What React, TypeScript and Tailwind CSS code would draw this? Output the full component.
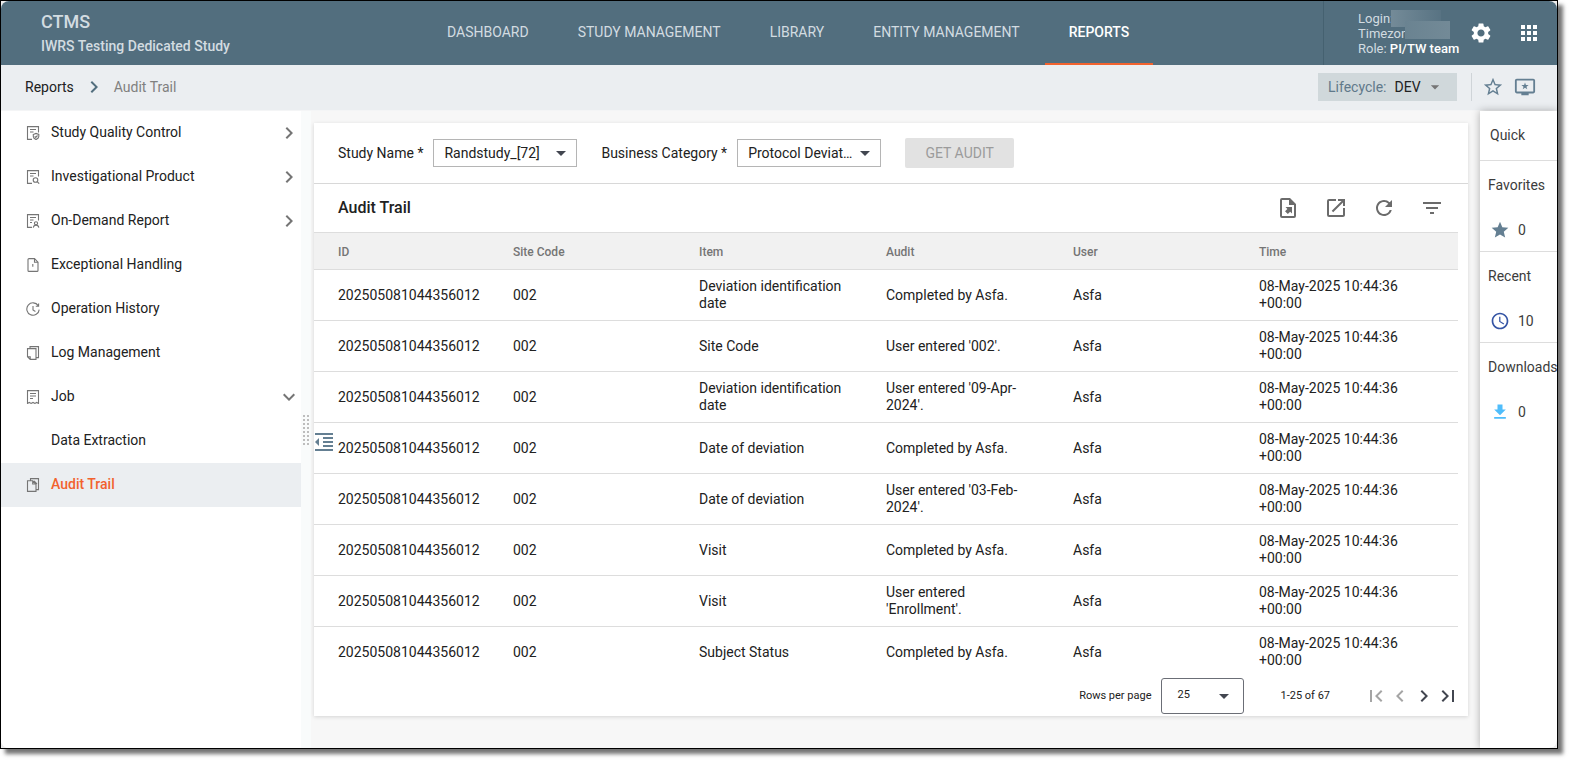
import type { ReactNode } from 'react'
import {
  MdAccessTime,
  MdApps,
  MdArrowDropDown,
  MdChevronLeft,
  MdChevronRight,
  MdExpandMore,
  MdFilterList,
  MdFirstPage,
  MdFormatIndentDecrease,
  MdLastPage,
  MdOpenInNew,
  MdRefresh,
  MdSettings,
  MdStar,
  MdStarBorder,
} from 'react-icons/md'

interface MenuItem {
  label: string
  icon?: ReactNode
  arrow?: 'right' | 'down'
  active?: boolean
}

interface AuditRow {
  item: string
  audit: string
}

const NAV = ['DASHBOARD', 'STUDY MANAGEMENT', 'LIBRARY', 'ENTITY MANAGEMENT', 'REPORTS']

function SmallIcon({ children }: { children: ReactNode }) {
  return (
    <svg className="size-[14px] shrink-0" viewBox="0 0 14 14" fill="none" stroke="currentColor" strokeWidth={1.1}>
      {children}
    </svg>
  )
}

// page outline shared by the report icons, open at the bottom right for the badge
const REPORT_PAGE = 'M6 13.4H1.5V.6h11v5.9M4 3.5h6M4 6h3.5'

const MENU: MenuItem[] = [
  {
    label: 'Study Quality Control',
    arrow: 'right',
    icon: (
      <SmallIcon>
        <path d={REPORT_PAGE} />
        <path d="M7.3 8.4 10 7.4l2.8 1v2.2c0 1.4-1.2 2.3-2.8 3-1.6-.7-2.7-1.6-2.7-3zM8.7 10.4l1 1 1.8-1.9" />
      </SmallIcon>
    ),
  },
  {
    label: 'Investigational Product',
    arrow: 'right',
    icon: (
      <SmallIcon>
        <path d={REPORT_PAGE} />
        <circle cx="9.5" cy="10" r="2.3" />
        <path d="m11.2 11.7 2 2" />
      </SmallIcon>
    ),
  },
  {
    label: 'On-Demand Report',
    arrow: 'right',
    icon: (
      <SmallIcon>
        <path d={REPORT_PAGE} />
        <path d="M4 8.500h2" />
        <circle cx="10" cy="9.3" r="1.6" />
        <path d="M7.3 13.6c.2-1.6 1-2.5 2.7-2.5s2.6.9 2.8 2.5" />
      </SmallIcon>
    ),
  },
  {
    label: 'Exceptional Handling',
    icon: (
      <SmallIcon>
        <path d="M3 .6h5.500L12 4.200v8.200a1 1 0 0 1-1 1H3a1 1 0 0 1-1-1V1.600a1 1 0 0 1 1-1zM8.500.6v3.600H12M6.800 6v2.800" />
      </SmallIcon>
    ),
  },
  {
    label: 'Operation History',
    icon: (
      <SmallIcon>
        <path d="M12.2 3.6A6.2 6.2 0 1 0 13.2 7.6M12.6 1.4v2.8H9.8M7 4v4l2.4 1.4" />
      </SmallIcon>
    ),
  },
  {
    label: 'Log Management',
    icon: (
      <SmallIcon>
        <path d="M4 2.600V.6h8.500v11h-2M1.500 2.600H10v10.800H4.200L1.500 10.700zM1.500 10.700h2.700v2.700" />
      </SmallIcon>
    ),
  },
  {
    label: 'Job',
    arrow: 'down',
    icon: (
      <SmallIcon>
        <path d="M1.5 13.4V.6h11v12.8l-1.8-1-1.8 1-1.900-1-1.900 1-1.800-1zM4 3.500h6M4 6h6M4 8.500h3" />
      </SmallIcon>
    ),
  },
  { label: 'Data Extraction' },
  {
    label: 'Audit Trail',
    active: true,
    icon: (
      <SmallIcon>
        <path d="M4.5 2.800V.6h8v11H10M1.500 2.800h5.200L10 6v7.400H1.500zM6.700 2.800V6H10M8 2.800l3 3" />
      </SmallIcon>
    ),
  },
]

const COLUMNS = [
  { label: 'ID', width: 'w-[187px] pl-6' },
  { label: 'Site Code', width: 'w-[186px] pl-3' },
  { label: 'Item', width: 'w-[187px] pl-3' },
  { label: 'Audit', width: 'w-[187px] pl-3' },
  { label: 'User', width: 'w-[186px] pl-3' },
  { label: 'Time', width: 'pl-3' },
]

const ROWS: AuditRow[] = [
  { item: 'Deviation identification date', audit: 'Completed by Asfa.' },
  { item: 'Site Code', audit: "User entered '002'." },
  { item: 'Deviation identification date', audit: "User entered '09-Apr-2024'." },
  { item: 'Date of deviation', audit: 'Completed by Asfa.' },
  { item: 'Date of deviation', audit: "User entered '03-Feb-2024'." },
  { item: 'Visit', audit: 'Completed by Asfa.' },
  { item: 'Visit', audit: "User entered 'Enrollment'." },
  { item: 'Subject Status', audit: 'Completed by Asfa.' },
]

function Header() {
  return (
    <header className="flex h-16 bg-[#526e7e] text-[#d3dce1]">
      <div className="flex w-[422px] shrink-0 flex-col justify-center pt-0.5 pl-10 font-medium">
        <div className="text-lg leading-6">CTMS</div>
        <div className="text-sm leading-6">IWRS Testing Dedicated Study</div>
      </div>
      <nav className="flex flex-1 gap-px">
        {NAV.map((label) => (
          <a
            key={label}
            href="#"
            className={`flex items-center border-b-2 px-6 text-sm ${
              label === 'REPORTS' ? 'border-[#f2622e] font-medium text-white' : 'border-transparent'
            }`}
          >
            {label}
          </a>
        ))}
      </nav>
      <div className="flex w-[234px] shrink-0 items-center border-l border-[#456170] pr-4 pl-[34px]">
        <div className="relative w-[112px] text-[13px] leading-[15px] whitespace-nowrap">
          <div>Login:</div>
          <div>Timezone:</div>
          <div>
            Role: <span className="font-medium text-white">PI/TW team</span>
          </div>
          <div className="absolute -top-px left-[33px] h-[17px] w-[50px] bg-linear-to-r from-[#748b98] to-[#587383]" />
          <div className="absolute top-[10px] left-[47px] h-[18px] w-[45px] bg-linear-to-r from-[#6a8391] to-[#738a97]" />
        </div>
        <button aria-label="Settings" className="text-white">
          <MdSettings className="size-6" />
        </button>
        <button aria-label="Applications" className="ml-6 text-white">
          <MdApps className="size-6" />
        </button>
      </div>
    </header>
  )
}

function Breadcrumbs() {
  return (
    <div className="flex h-[46px] items-center border-b border-[#f4f5f6] bg-[#ebeef1] pr-[21px] pb-0.5 pl-6 text-sm">
      <a href="#" className="text-[#212121]">
        Reports
      </a>
      <MdChevronRight className="mx-2 size-6 text-[#526e7e]" />
      <span className="text-[#808080]">Audit Trail</span>
      <div className="ml-auto flex items-center">
        <div className="relative flex h-7 w-[139px] items-center bg-[#d0d8db] pl-[10px]">
          <label htmlFor="lifecycle" className="text-[#60798a]">
            Lifecycle:
          </label>
          <select id="lifecycle" className="ml-2 flex-1 appearance-none bg-transparent text-[#212121]">
            <option>DEV</option>
          </select>
          <MdArrowDropDown className="pointer-events-none absolute right-3 size-5 text-[#757575]" />
        </div>
        <div className="mr-[10px] ml-[14px] h-7 w-px bg-[#cfd4d8]" />
        <button aria-label="Add to favorites" className="text-[#647f92]">
          <MdStarBorder className="size-[22px]" />
        </button>
        <button aria-label="Quick panel" className="ml-[10px] text-[#647f92]">
          <svg className="size-[22px]" viewBox="0 0 24 24" fill="currentColor">
            <path d="M21 3H3a2 2 0 0 0-2 2v12a2 2 0 0 0 2 2h5v2h8v-2h5a2 2 0 0 0 2-2V5a2 2 0 0 0-2-2zm0 14H3V5h18v12z" />
            <path d="m12 7 1 2.8h3l-2.4 1.8.9 2.9-2.5-1.8-2.5 1.8.9-2.9L8 9.8h3z" />
          </svg>
        </button>
      </div>
    </div>
  )
}

function Sidebar() {
  return (
    <nav className="w-[300px] shrink-0 bg-white text-sm">
      {MENU.map((item) => (
        <a
          key={item.label}
          href="#"
          className={`flex h-11 items-center pb-0.5 pl-[25px] ${
            item.active ? 'bg-[#ebeef1] font-medium text-[#f2622e]' : 'text-[#212121]'
          }`}
        >
          <span className="mt-0.5 w-[25px] text-[#757575]">{item.icon}</span>
          {item.label}
          {item.arrow === 'right' && <MdChevronRight className="mt-0.5 ml-auto size-6 text-[#757575]" />}
          {item.arrow === 'down' && <MdExpandMore className="mt-0.5 ml-auto size-6 text-[#757575]" />}
        </a>
      ))}
    </nav>
  )
}

function Splitter() {
  return (
    <div className="flex w-[10px] shrink-0 items-center justify-center bg-[#f9fbfb]">
      <div className="grid grid-cols-2 gap-0.5">
        {Array.from({ length: 16 }, (_, i) => (
          <span key={i} className="size-0.5 bg-[#bdbdbd]" />
        ))}
      </div>
    </div>
  )
}

function FilterSelect({ id, label, value }: { id: string; label: string; value: string }) {
  return (
    <div className="flex items-center gap-[10px]">
      <label htmlFor={id}>{label} *</label>
      <div className="relative">
        <select
          id={id}
          className="h-7 w-36 appearance-none overflow-hidden border border-[#b5b5b5] bg-white pr-[25px] pl-[10px] text-ellipsis"
        >
          <option>{value}</option>
        </select>
        <MdArrowDropDown className="pointer-events-none absolute top-0.5 right-1 size-6 text-[#424650]" />
      </div>
    </div>
  )
}

function AuditTable() {
  return (
    <div className="pr-[10px]">
      <table className="w-full table-fixed border-separate border-spacing-0 text-left text-sm leading-[17px]">
        <thead className="bg-[#f1f1f1] text-xs text-[#757575]">
          <tr>
            {COLUMNS.map((col) => (
              <th key={col.label} className={`h-[37px] border-b border-[#dddddd] pt-0.5 font-medium ${col.width}`}>
                {col.label}
              </th>
            ))}
          </tr>
        </thead>
        <tbody className="[&_td]:h-[51px] [&_td]:border-b [&_td]:border-[#dddddd] [&_td]:pr-6 [&_td]:pl-3 [&_td:first-child]:pr-0 [&_td:first-child]:pl-6 [&_tr:last-child_td]:h-[50px] [&_tr:last-child_td]:border-b-0">
          {ROWS.map((row, i) => (
            <tr key={i}>
              <td>202505081044356012</td>
              <td>002</td>
              <td>{row.item}</td>
              <td>{row.audit}</td>
              <td>Asfa</td>
              <td>08-May-2025 10:44:36 +00:00</td>
            </tr>
          ))}
        </tbody>
      </table>
    </div>
  )
}

function Pagination() {
  return (
    <div className="flex items-center justify-end pt-px pr-2 pb-0.5 text-[11px]">
      <label htmlFor="rows-per-page">Rows per page</label>
      <div className="relative ml-[10px]">
        <select
          id="rows-per-page"
          className="h-9 w-[83px] appearance-none rounded-[3px] border border-[#6b6e76] bg-white pb-0.5 pl-[15px]"
        >
          <option>25</option>
        </select>
        <MdArrowDropDown className="pointer-events-none absolute top-1.5 right-2 size-6 text-[#424650]" />
      </div>
      <span className="ml-9">1-25 of 67</span>
      <div className="ml-[34px] flex text-[#424650]">
        <button aria-label="First page" className="text-[#a5a5a5]" disabled>
          <MdFirstPage className="size-6" />
        </button>
        <button aria-label="Previous page" className="text-[#a5a5a5]" disabled>
          <MdChevronLeft className="size-6" />
        </button>
        <button aria-label="Next page">
          <MdChevronRight className="size-6" />
        </button>
        <button aria-label="Last page">
          <MdLastPage className="size-6" />
        </button>
      </div>
    </div>
  )
}

function MainPanel() {
  return (
    <main className="relative min-w-0 flex-1 bg-[#f7f7f7] pt-3 pr-3 pb-8 pl-[3px]">
      <div className="bg-white text-[#212121] shadow-[0_1px_4px_rgba(0,0,0,0.14)]">
        <div className="flex h-[61px] items-center gap-6 border-b border-[#d8d8d8] px-6 text-sm">
          <FilterSelect id="study-name" label="Study Name" value="Randstudy_[72]" />
          <FilterSelect id="business-category" label="Business Category" value="Protocol Deviation" />
          <button className="h-[30px] w-[109px] rounded-xs bg-[#e2e2e2] text-[#9b9b9b]" disabled>
            GET AUDIT
          </button>
        </div>
        <div className="mr-[10px] flex h-[49px] items-center justify-between border-b border-[#dddddd] pr-[14px] pl-6">
          <h1 className="text-base font-medium">Audit Trail</h1>
          <div className="flex gap-6 text-[#6b6b6b]">
            <button aria-label="Export">
              <svg className="size-6" viewBox="0 0 24 24" fill="currentColor">
                <path
                  fillRule="evenodd"
                  d="M6 2h8l6 6v12a2 2 0 0 1-2 2H6a2 2 0 0 1-2-2V4a2 2 0 0 1 2-2zm0 2v16h12V9h-5V4z"
                />
                <path d="M9.500 11H16v6.500l-1.800-1.800-2.400 2.400L9 15.300l2.400-2.400z" />
              </svg>
            </button>
            <button aria-label="Open in new window">
              <MdOpenInNew className="size-6" />
            </button>
            <button aria-label="Refresh">
              <MdRefresh className="size-6" />
            </button>
            <button aria-label="Filter">
              <MdFilterList className="size-6" />
            </button>
          </div>
        </div>
        <AuditTable />
        <Pagination />
      </div>
      <button aria-label="Collapse menu" className="absolute top-1/2 left-px text-[#647f92]">
        <MdFormatIndentDecrease className="size-6" />
      </button>
    </main>
  )
}

function QuickPanel() {
  const sections = [
    { label: 'Favorites', count: 0, icon: <MdStar className="size-5 text-[#647f92]" /> },
    { label: 'Recent', count: 10, icon: <MdAccessTime className="size-5 text-[#3454a4]" /> },
    {
      label: 'Downloads',
      count: 0,
      icon: (
        <svg className="size-5 text-[#4fbdfb]" viewBox="0 0 24 24" fill="currentColor">
          <path d="M19 9h-4V3H9v6H5l7 7 7-7zM5 18v2h14v-2H5z" />
        </svg>
      ),
    },
  ]

  return (
    <aside className="z-10 w-[77px] shrink-0 bg-white text-sm text-[#3c3c3c] shadow-[0_0_8px_rgba(0,0,0,0.3)]">
      <div className="flex h-[50px] items-center border-b border-[#dddddd] pb-0.5 pl-[10px]">Quick</div>
      {sections.map((section) => (
        <section key={section.label} className="h-[91px] border-b border-[#dddddd] pt-[14px] pl-2 last:border-b-0">
          <h2 className="leading-5">{section.label}</h2>
          <div className="mt-[25px] flex items-center gap-2 pl-0.5 leading-5">
            {section.icon}
            <span>{section.count}</span>
          </div>
        </section>
      ))}
    </aside>
  )
}

export default function App() {
  return (
    <div className="flex min-h-screen bg-white pr-3 pb-3 font-[Roboto,'Liberation_Sans',sans-serif]">
      <div className="flex flex-1 border border-black bg-[#eeeeee] shadow-[5px_5px_4px_rgba(0,0,0,0.55)]">
        <div className="flex min-w-0 flex-1 flex-col overflow-hidden rounded-lg bg-white">
          <Header />
          <Breadcrumbs />
          <div className="flex flex-1">
            <Sidebar />
            <Splitter />
            <MainPanel />
            <QuickPanel />
          </div>
        </div>
      </div>
    </div>
  )
}
